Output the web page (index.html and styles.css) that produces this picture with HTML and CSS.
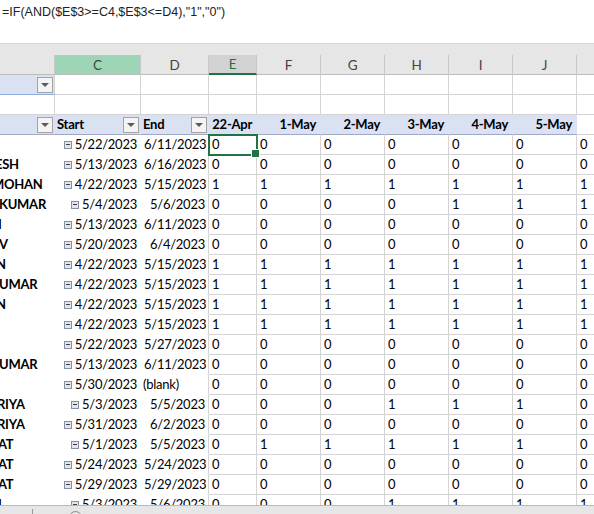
FILE: index.html
```html
<!DOCTYPE html>
<html>
<head>
  <title>Leave tracker</title>
  <link rel="stylesheet" href="styles.css">
</head>
<body>

  <div class="formula-bar">=IF(AND($E$3&gt;=C4,$E$3&lt;=D4),"1","0")</div>
  <div class="ribbon-gap"></div>

  <div class="sheet">
    <table class="grid">
      <colgroup>
        <col class="col-b">
        <col class="col-c">
        <col class="col-d">
        <col class="col-e">
        <col class="col-n"><col class="col-n"><col class="col-n">
        <col class="col-n"><col class="col-n"><col class="col-n">
      </colgroup>
      <thead>
        <tr class="letters">
          <th></th>
          <th class="col-picked">C</th>
          <th>D</th>
          <th class="col-active">E</th>
          <th>F</th>
          <th>G</th>
          <th>H</th>
          <th>I</th>
          <th>J</th>
          <th>K</th>
        </tr>
      </thead>
      <tbody id="rows">
        <tr>
          <td class="page-filter"><div class="cell-flex"><span></span><span class="filter-btn"></span></div></td>
          <td></td><td></td><td></td><td></td><td></td><td></td><td></td><td></td><td></td>
        </tr>
        <tr>
          <td></td><td></td><td></td><td></td><td></td><td></td><td></td><td></td><td></td><td></td>
        </tr>
        <tr class="pivot-head">
          <td><div class="cell-flex"><span></span><span class="filter-btn"></span></div></td>
          <td><div class="cell-flex"><span>Start</span><span class="filter-btn"></span></div></td>
          <td><div class="cell-flex"><span>End</span><span class="filter-btn"></span></div></td>
          <td class="day">22-Apr</td>
          <td class="day">1-May</td>
          <td class="day">2-May</td>
          <td class="day">3-May</td>
          <td class="day">4-May</td>
          <td class="day">5-May</td>
          <td class="outside"></td>
        </tr>
        <!-- data rows are added below -->
      </tbody>
    </table>
  </div>

  <div class="sheet-tabs">
    <span class="tab-sep"></span>
    <span class="tab-add"></span>
  </div>

  <script>
  // name (only the visible tail of it), start, end, how far the name is scrolled off
  var leaves = [
    ["", "5/22/2023", "6/11/2023", 0],
    ["ESH", "5/13/2023", "6/16/2023", 5],
    ["MOHAN", "4/22/2023", "5/15/2023", 8],
    ["KUMAR", "5/4/2023", "5/6/2023", 1],
    ["I", "5/13/2023", "6/11/2023", 2],
    ["V", "5/20/2023", "6/4/2023", 1],
    ["N", "4/22/2023", "5/15/2023", 4],
    ["UMAR", "4/22/2023", "5/15/2023", 1],
    ["N", "4/22/2023", "5/15/2023", 4],
    ["", "4/22/2023", "5/15/2023", 0],
    ["", "5/22/2023", "5/27/2023", 0],
    ["UMAR", "5/13/2023", "6/11/2023", 1],
    ["", "5/30/2023", "(blank)", 0],
    ["RIYA", "5/3/2023", "5/5/2023", 3],
    ["RIYA", "5/31/2023", "6/2/2023", 3],
    ["AT", "5/1/2023", "5/5/2023", 2],
    ["AT", "5/24/2023", "5/24/2023", 2],
    ["AT", "5/29/2023", "5/29/2023", 2],
    ["I", "5/3/2023", "5/6/2023", 2]
  ];

  var days = ["4/22/2023", "5/1/2023", "5/2/2023", "5/3/2023", "5/4/2023", "5/5/2023", "5/6/2023"];

  var body = document.getElementById("rows");

  leaves.forEach(function(row, r) {
    var tr = document.createElement("tr");
    tr.className = "data";

    var name = document.createElement("td");
    name.className = "name";
    name.innerHTML = '<span class="name-text"></span>';
    name.firstChild.textContent = row[0];
    name.firstChild.style.marginLeft = -row[3] + "px";
    tr.appendChild(name);

    var start = document.createElement("td");
    start.className = "start";
    start.innerHTML = '<span class="toggle"></span>' + row[1];
    tr.appendChild(start);

    var end = document.createElement("td");
    end.className = "end";
    end.textContent = row[2];
    if (row[2] == "(blank)") end.className = "end blank";
    tr.appendChild(end);

    var from = new Date(row[1]);
    var to = row[2] == "(blank)" ? null : new Date(row[2]);

    days.forEach(function(d, i) {
      var day = new Date(d);
      var td = document.createElement("td");
      td.className = "flag";
      td.textContent = (to && day >= from && day <= to) ? "1" : "0";
      if (r == 0 && i == 0) td.className = "flag selected";
      tr.appendChild(td);
    });

    body.appendChild(tr);
  });
  </script>
</body>
</html>
```

FILE: styles.css
```css
* {
	box-sizing: border-box;
}

html, body {
	margin: 0;
	padding: 0;
	height: 514px;
	overflow: hidden;
	background-color: #ffffff;
}

body {
	display: flex;
	flex-direction: column;
	font-family: 'Lato', 'Liberation Sans', sans-serif;
	font-size: 13px;
	letter-spacing: -0.25px;
	color: #000000;
}

.formula-bar {
	flex: none;
	height: 44px;
	padding: 3px 2px 0 2px;
	border-bottom: 1px solid #d6d6d6;
	font-family: 'Liberation Sans', Arial, sans-serif;
	font-size: 12.5px;
	letter-spacing: 0;
	line-height: 18px;
	color: #222222;
	white-space: nowrap;
}

.ribbon-gap {
	flex: none;
	height: 11px;
	background-color: #e6e6e6;
}

.sheet {
	flex: 1;
	overflow: hidden;
	background-color: #ffffff;
}

.grid {
	table-layout: fixed;
	border-collapse: separate;
	border-spacing: 0;
	width: 641px;
}

.col-b { width: 55px; }
.col-c { width: 86px; }
.col-d { width: 68px; }
.col-e { width: 48px; }
.col-n { width: 64px; }

/* column letters */
.letters th {
	height: 19px;
	padding: 0;
	background-color: #e6e6e6;
	border-right: 1px solid #c8c8c8;
	border-bottom: 1px solid #bdbdbd;
	font-weight: 400;
	font-size: 13.5px;
	color: #444444;
	line-height: 18px;
	text-align: center;
}

.letters th.col-picked {
	background-color: #9fd5b7;
}

.letters th.col-active {
	background-color: #d2d2d2;
	border-bottom: 2px solid #217346;
	color: #217346;
}

td {
	height: 20px;
	padding: 0 3px;
	border-right: 1px solid #d4d4d4;
	border-bottom: 1px solid #d4d4d4;
	line-height: 19px;
	white-space: nowrap;
	vertical-align: middle;
}

.cell-flex {
	display: flex;
	align-items: center;
	justify-content: space-between;
}

td.page-filter {
	background-color: #d9e1f2;
	border-bottom: 1px solid #8ea9db;
	padding-right: 1px;
}

.filter-btn {
	display: inline-flex;
	align-items: center;
	justify-content: center;
	width: 16px;
	height: 16px;
	border: 1px solid #a3a3a3;
	background-color: #f4f4f4;
}

.filter-btn::after {
	content: "";
	width: 0;
	height: 0;
	border-left: 4px solid transparent;
	border-right: 4px solid transparent;
	border-top: 4px solid #5a5a5a;
}

/* pivot header row */
.pivot-head td {
	background-color: #d9e1f2;
	border-right: 1px solid #d9e1f2;
	border-bottom: 1px solid #9fa9c2;
	font-weight: 700;
	padding: 0 1px 0 2px;
}

.pivot-head td.day {
	text-align: right;
	padding-right: 4px;
}

.pivot-head td.outside {
	background-color: #ffffff;
	border-bottom: 1px solid #d4d4d4;
	border-right: 1px solid #d4d4d4;
}

/* data rows */
.data td.name,
.data td.start {
	border-right: 1px solid transparent;
	border-bottom: 1px solid transparent;
}

.data td.end {
	border-bottom: 1px solid transparent;
}

.data td.name {
	font-weight: 700;
	padding-left: 0;
	overflow: hidden;
}

.name-text {
	display: inline-block;
}

.data td.start,
.data td.end {
	text-align: right;
	padding-right: 3px;
}

.data td.blank {
	text-align: left;
	padding-left: 2px;
}

.toggle {
	display: inline-block;
	position: relative;
	width: 8px;
	height: 8px;
	margin-right: 3px;
	border: 1px solid #8590a4;
	background-color: #e2e5eb;
	vertical-align: 0px;
}

.toggle::after {
	content: "";
	position: absolute;
	left: 1px;
	right: 1px;
	top: 2px;
	height: 1px;
	background-color: #3c3c3c;
}

.data td.flag {
	padding-left: 3px;
}

td.selected {
	position: relative;
	outline: 2px solid #217346;
	outline-offset: -1px;
}

td.selected::after {
	content: "";
	position: absolute;
	right: -4px;
	bottom: -4px;
	width: 7px;
	height: 7px;
	background-color: #217346;
	border: 1px solid #ffffff;
}

/* sheet tab strip at the bottom */
.sheet-tabs {
	flex: none;
	position: relative;
	height: 9px;
	background-color: #e6e6e6;
	border-top: 1px solid #b9b9b9;
	overflow: hidden;
}

.tab-sep {
	position: absolute;
	left: 32px;
	top: 3px;
	width: 1px;
	height: 10px;
	background-color: #9a9a9a;
}

.tab-add {
	position: absolute;
	left: 69px;
	top: 5px;
	width: 13px;
	height: 13px;
	border: 1px solid #8a8a8a;
	border-radius: 50%;
}
```
